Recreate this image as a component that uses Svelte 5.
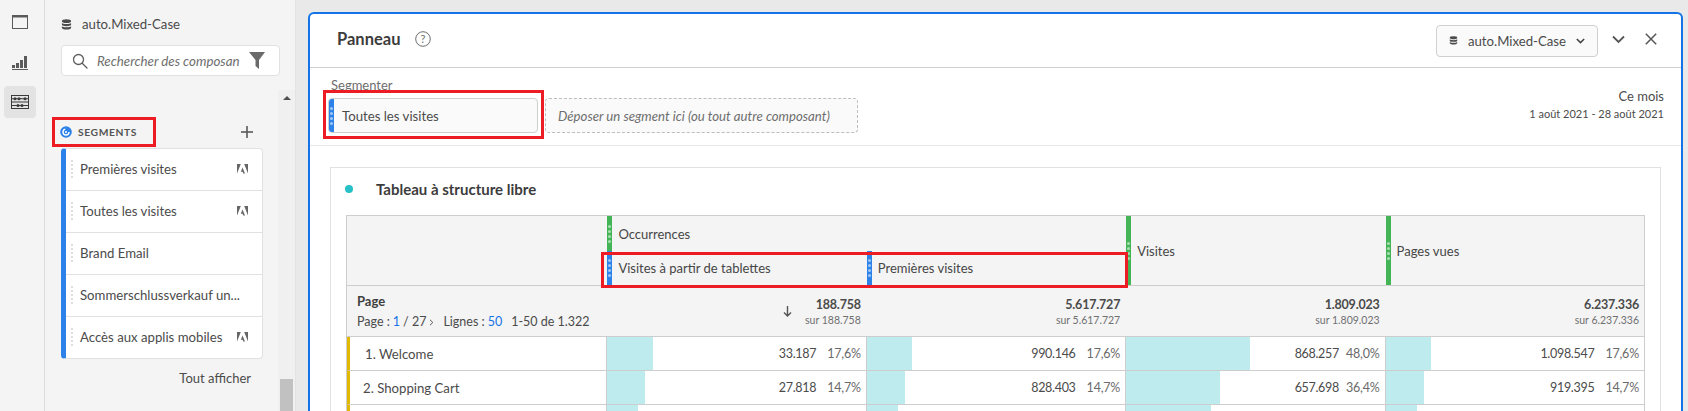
<script>
  const segments = [
    { name: 'Premières visites', adobe: true },
    { name: 'Toutes les visites', adobe: true },
    { name: 'Brand Email', adobe: false },
    { name: 'Sommerschlussverkauf un...', adobe: false },
    { name: 'Accès aux applis mobiles', adobe: true },
  ];

  const totals = [
    { value: '188.758', of: 'sur 188.758', sorted: true },
    { value: '5.617.727', of: 'sur 5.617.727' },
    { value: '1.809.023', of: 'sur 1.809.023' },
    { value: '6.237.336', of: 'sur 6.237.336' },
  ];

  const rows = [
    {
      label: '1. Welcome',
      indent: true,
      cells: [
        { bar: 17.6, value: '33.187', pct: '17,6%' },
        { bar: 17.6, value: '990.146', pct: '17,6%' },
        { bar: 48, value: '868.257', pct: '48,0%' },
        { bar: 17.6, value: '1.098.547', pct: '17,6%' },
      ],
    },
    {
      label: '2. Shopping Cart',
      cells: [
        { bar: 14.7, value: '27.818', pct: '14,7%' },
        { bar: 14.7, value: '828.403', pct: '14,7%' },
        { bar: 36.4, value: '657.698', pct: '36,4%' },
        { bar: 14.7, value: '919.395', pct: '14,7%' },
      ],
    },
    {
      label: '',
      cells: [
        { bar: 11.7, value: '', pct: '' },
        { bar: 12.2, value: '', pct: '' },
        { bar: 32.7, value: '', pct: '' },
        { bar: 12, value: '', pct: '' },
      ],
    },
  ];
</script>

{#snippet dbIcon(size)}
  <svg class="db" width={size} height={size} viewBox="0 0 12 12">
    <ellipse cx="6" cy="2.4" rx="5" ry="2" fill="#4b4b4b" />
    <path d="M1 4.4c1 1.5 9 1.5 10 0v2.2c-1 1.6-9 1.6-10 0z" fill="#4b4b4b" />
    <path d="M1 8c1 1.5 9 1.5 10 0v1.7c-1 2.4-9 2.4-10 0z" fill="#4b4b4b" />
  </svg>
{/snippet}

{#snippet grip()}
  <span class="grip"><i></i><i></i><i></i><i></i></span>
{/snippet}

<div class="app">
  <nav class="rail">
    <button class="rail-btn" aria-label="Panneaux">
      <svg width="18" height="16" viewBox="0 0 18 16" fill="none" stroke="#5a5a5a">
        <rect x="1.5" y="1.5" width="15" height="13" stroke-width="1" />
        <rect x="1.5" y="1.5" width="15" height="2" fill="#5a5a5a" stroke="none" />
      </svg>
    </button>
    <button class="rail-btn" aria-label="Visualisations">
      <svg width="18" height="16" viewBox="0 0 18 16" fill="#5a5a5a">
        <rect x="1" y="11" width="3" height="3" />
        <rect x="5" y="9" width="3" height="5" />
        <rect x="9" y="6" width="3" height="8" />
        <rect x="13" y="2" width="3" height="12" />
        <rect x="1" y="15" width="16" height="1" />
      </svg>
    </button>
    <button class="rail-btn active" aria-label="Composants">
      <svg width="20" height="16" viewBox="0 0 20 16" fill="#3a3a3a">
        <path d="M1 1h18v14H1z M2 2v12h16V2z" fill-rule="evenodd" />
        <rect x="1" y="7.5" width="18" height="1" />
        <rect x="2" y="4.2" width="16" height="1" />
        <rect x="2" y="11" width="16" height="1" />
        <circle cx="5" cy="4.7" r="1.5" /><circle cx="9" cy="4.7" r="1.5" /><circle cx="15" cy="4.7" r="1.5" />
        <circle cx="8" cy="11.5" r="1.5" /><circle cx="12" cy="11.5" r="1.5" />
      </svg>
    </button>
  </nav>

  <aside class="sidebar">
    <div class="side-body">
      <div class="suite">
        {@render dbIcon(11)}
        <span>auto.Mixed-Case</span>
      </div>

      <div class="search">
        <svg width="16" height="16" viewBox="0 0 16 16" fill="none" stroke="#5f5f5f" stroke-width="1.3">
          <circle cx="6.5" cy="6.5" r="5" />
          <path d="M10.2 10.2 15 15" stroke-linecap="round" />
        </svg>
        <span class="placeholder">Rechercher des composan</span>
        <svg width="16" height="17" viewBox="0 0 16 17" fill="#6a6a6a">
          <path d="M0 0h16L10 8v9L6.5 14V8z" />
        </svg>
      </div>

      <div class="seg-head">
        <div class="seg-title">
          <svg width="12" height="12" viewBox="0 0 12 12">
            <circle cx="6" cy="6" r="5.8" fill="#2c82e8" />
            <circle cx="6" cy="6" r="3" fill="none" stroke="#fff" stroke-width="1.4" stroke-dasharray="13 6" />
            <circle cx="6" cy="6" r="1" fill="#fff" />
          </svg>
          <span>SEGMENTS</span>
        </div>
        <svg class="plus" width="12" height="12" viewBox="0 0 12 12" fill="#5a5a5a">
          <rect x="5.2" y="0" width="1.6" height="12" />
          <rect x="0" y="5.2" width="12" height="1.6" />
        </svg>
      </div>

      <ul class="seg-list">
        {#each segments as s}
          <li>
            <span class="seg-dots"></span>
            <span class="seg-name">{s.name}</span>
            {#if s.adobe}
              <svg class="adobe" width="11" height="10" viewBox="0 0 11 10" fill="#666">
                <path d="M0 0h3.8L0 9.6z" />
                <path d="M7.2 0H11v9.6z" />
                <path d="M5.5 3.4 8 9.6H6.3L5.6 7.8H3.8z" />
              </svg>
            {/if}
          </li>
        {/each}
      </ul>

      <div class="show-all">Tout afficher</div>
    </div>
    <div class="scroll-track">
      <span class="scroll-up"></span>
      <span class="scroll-thumb"></span>
    </div>
  </aside>

  <main class="main">
    <section class="panel">
      <header class="panel-head">
        <h1>Panneau</h1>
        <svg class="help" width="16" height="16" viewBox="0 0 16 16">
          <circle cx="8" cy="8" r="7.3" fill="none" stroke="#6e6e6e" />
          <text x="8" y="11.5" text-anchor="middle">?</text>
        </svg>
        <div class="head-right">
          <div class="suite-select">
            {@render dbIcon(11)}
            <span>auto.Mixed-Case</span>
            <svg width="11" height="8" viewBox="0 0 11 8" fill="none" stroke="#444" stroke-width="1.9">
              <path d="M1 1.5l4.5 4.5L10 1.5" />
            </svg>
          </div>
          <svg width="13" height="9" viewBox="0 0 13 9" fill="none" stroke="#555" stroke-width="1.8">
            <path d="M1 1.5l5.5 5.5L12 1.5" />
          </svg>
          <svg class="close" width="12" height="12" viewBox="0 0 12 12" fill="none" stroke="#555" stroke-width="1.5">
            <path d="M.8.8l10.4 10.4M11.2.8.8 11.2" />
          </svg>
        </div>
      </header>

      <div class="filters">
        <div class="drop-area">
          <div class="filter-label">Segmenter</div>
          <div class="filter-row">
            <div class="chip-mark">
              <div class="chip">
                <span class="chip-bar">{@render grip()}</span>
                <span>Toutes les visites</span>
              </div>
            </div>
            <div class="drop-zone">Déposer un segment ici (ou tout autre composant)</div>
          </div>
        </div>
        <div class="range">
          <div class="range-name">Ce mois</div>
          <div class="range-dates">1 août 2021 - 28 août 2021</div>
        </div>
      </div>

      <div class="body">
        <div class="card">
          <div class="card-title">
            <span class="dot"></span>
            <h2>Tableau à structure libre</h2>
          </div>

          <div class="table">
            <div class="cell head-blank"></div>
            <div class="cell head occ">
              <span class="bar-mark green">{@render grip()}</span>
              <span>Occurrences</span>
            </div>
            <div class="cell head tall c3">
              <span class="bar-mark green">{@render grip()}</span>
              <span>Visites</span>
            </div>
            <div class="cell head tall c4">
              <span class="bar-mark green">{@render grip()}</span>
              <span>Pages vues</span>
            </div>
            <div class="sub-pair">
              <div class="cell head sub">
                <span class="bar-mark blue">{@render grip()}</span>
                <span>Visites à partir de tablettes</span>
              </div>
              <div class="cell head sub">
                <span class="bar-mark blue">{@render grip()}</span>
                <span>Premières visites</span>
              </div>
              <span class="red-box"></span>
            </div>

            <div class="cell total-dim">
              <div class="dim-name">Page</div>
              <div class="pager">
                Page : <a href="#p">1</a> / 27
                <svg width="5" height="7" viewBox="0 0 5 7" fill="none" stroke="#555" stroke-width="1"><path d="M1 .8 3.8 3.5 1 6.2" /></svg>
                <span class="gap">Lignes :</span> <a href="#l">50</a>
                <span class="gap">1-50 de 1.322</span>
              </div>
            </div>
            {#each totals as t}
              <div class="cell total">
                {#if t.sorted}
                  <svg class="sort" width="9" height="11" viewBox="0 0 9 11" fill="none" stroke="#555" stroke-width="1.4">
                    <path d="M4.5 0v10M1 6.5l3.5 3.5L8 6.5" />
                  </svg>
                {/if}
                <div class="total-nums">
                  <strong>{t.value}</strong>
                  <small>{t.of}</small>
                </div>
              </div>
            {/each}

            {#each rows as r}
              <div class="cell row-dim" class:indent={r.indent}>{r.label}</div>
              {#each r.cells as c, i}
                <div class="cell data" class:tight={i === 2}>
                  <span class="data-bar" style="width:{c.bar}%"></span>
                  {#if c.value}
                    <span class="num">{c.value}</span>
                    <span class="pct">{c.pct}</span>
                  {/if}
                </div>
              {/each}
            {/each}
          </div>
        </div>
      </div>
    </section>
  </main>
</div>

<style>
  :global(body) {
    overflow: hidden;
    background: #e9e9e9;
  }

  .app {
    display: flex;
    height: 411px;
    overflow: hidden;
    font-family: Lato, "Open Sans", sans-serif;
    font-size: 13.2px;
    color: #4b4b4b;
  }

  /* left icon rail */
  .rail {
    width: 45px;
    flex: none;
    box-sizing: border-box;
    background: #f4f4f4;
    border-right: 1px solid #dcdcdc;
    padding: 6px 4px;
    display: flex;
    flex-direction: column;
    gap: 8px;
  }

  .rail-btn {
    width: 32px;
    height: 32px;
    padding: 0;
    border: 0;
    background: none;
    border-radius: 4px;
    display: flex;
    align-items: center;
    justify-content: center;
  }
  .rail-btn.active { background: #e3e3e3; }

  /* components sidebar */
  .sidebar {
    width: 250px;
    flex: none;
    display: flex;
    background: #f4f4f4;
    border-right: 1px solid #e3e3e3;
  }

  .side-body {
    flex: 1;
    padding: 0 0 0 16px;
    min-width: 0;
  }

  .suite {
    height: 48px;
    display: flex;
    align-items: center;
    gap: 10px;
  }

  .search {
    width: 219px;
    height: 31px;
    margin-top: -3px;
    box-sizing: border-box;
    background: #fff;
    border: 1px solid #e1e1e1;
    border-radius: 4px;
    padding: 0 14px 0 10px;
    display: flex;
    align-items: center;
    gap: 9px;
  }

  .placeholder {
    flex: 1;
    overflow: hidden;
    white-space: nowrap;
    font-style: italic;
    color: #6e6e6e;
    font-size: 13.3px;
  }

  .seg-head {
    width: 202px;
    margin-top: 40px;
    height: 32px;
    display: flex;
    align-items: center;
    justify-content: space-between;
  }

  .seg-title {
    display: flex;
    align-items: center;
    gap: 6px;
    height: 30px;
    width: 104px;
    box-sizing: border-box;
    margin-left: -9px;
    border: 3px solid #ed1c24;
    padding-left: 5px;
    font-size: 10.3px;
    font-weight: 700;
    letter-spacing: 0.6px;
    color: #555;
  }

  .plus { margin-right: 10px; }

  .seg-list {
    list-style: none;
    margin: 0;
    padding: 0;
    width: 202px;
    box-sizing: border-box;
    background: #fff;
    border: 1px solid #e1e1e1;
    border-left: 5px solid #2c82e8;
    border-radius: 4px;
  }

  .seg-list li {
    height: 42px;
    box-sizing: border-box;
    display: flex;
    align-items: center;
    padding: 0 14px 2px 5px;
    border-bottom: 1px solid #e1e1e1;
  }
  .seg-list li:last-child { border-bottom: 0; height: 41px; }

  .seg-dots {
    width: 2px;
    height: 18px;
    margin-right: 7px;
    background: repeating-linear-gradient(#dedede 0 2px, transparent 2px 4px);
  }

  .seg-name {
    flex: 1;
    white-space: nowrap;
  }

  .show-all {
    width: 190px;
    margin-top: 11px;
    text-align: right;
    font-size: 13px;
  }

  .scroll-track {
    width: 17px;
    flex: none;
    margin-top: 90px;
    background: #f0f0f0;
    display: flex;
    flex-direction: column;
    align-items: center;
    justify-content: space-between;
  }

  .scroll-up {
    margin-top: 6px;
    width: 0;
    height: 0;
    border: 4px solid transparent;
    border-top: 0;
    border-bottom: 4px solid #505050;
  }

  .scroll-thumb {
    width: 13px;
    height: 32px;
    background: #c1c1c1;
  }

  /* main panel */
  .main {
    flex: 1;
    min-width: 0;
    padding: 12px 5px 0 12px;
    background: #e9e9e9;
  }

  .panel {
    height: 420px;
    box-sizing: border-box;
    background: #fff;
    border: 2px solid #1473e6;
    border-bottom: 0;
    border-radius: 6px 6px 0 0;
  }

  .panel-head {
    height: 54px;
    box-sizing: border-box;
    border-bottom: 1px solid #d0d0d0;
    display: flex;
    align-items: center;
    padding: 0 24px 3px 27px;
    gap: 15px;
  }

  .panel-head h1 {
    margin: 0;
    font-size: 16.5px;
    font-weight: 700;
    color: #3c3c3c;
  }

  .help text {
    font-size: 11px;
    fill: #6e6e6e;
  }

  .head-right {
    margin-left: auto;
    display: flex;
    align-items: center;
    gap: 14px;
  }

  .close { margin-left: 6px; }

  .suite-select {
    width: 162px;
    height: 32px;
    flex: none;
    box-sizing: border-box;
    border: 1px solid #d0d0d0;
    border-radius: 4px;
    background: #fafafa;
    display: flex;
    align-items: center;
    gap: 10px;
    padding: 0 12px;
    margin-top: 3px;
    white-space: nowrap;
  }

  .filters {
    height: 78px;
    box-sizing: border-box;
    border-bottom: 1px solid #e8e8e8;
    display: flex;
    justify-content: space-between;
    padding: 11px 17px 0 15px;
  }

  .filter-label {
    padding-left: 6px;
    height: 11px;
    line-height: 13px;
    font-size: 13px;
    color: #6e6e6e;
  }

  .filter-row {
    display: flex;
    align-items: center;
  }

  .chip-mark {
    border: 3px solid #ed1c24;
    padding: 5px 3px 3px 2px;
    margin-left: -2px;
    width: 221px;
    box-sizing: border-box;
  }

  .chip {
    height: 35px;
    box-sizing: border-box;
    background: #fafafa;
    border: 1px solid #cfcfcf;
    border-radius: 4px;
    display: flex;
    align-items: center;
    gap: 8px;
    overflow: hidden;
  }

  .chip-bar {
    width: 5px;
    align-self: stretch;
    background: #2c82e8;
    display: flex;
    align-items: center;
    justify-content: center;
  }

  .drop-zone {
    width: 313px;
    height: 35px;
    margin-top: 2px;
    margin-left: 1px;
    box-sizing: border-box;
    background: #fafafa;
    border: 1px dashed #bdbdbd;
    border-radius: 4px;
    display: flex;
    align-items: center;
    padding-left: 12px;
    font-style: italic;
    color: #6e6e6e;
  }

  .range { text-align: right; padding-top: 6px; }

  .range-name {
    font-size: 13px;
    margin-top: 2px;
    line-height: 18px;
  }

  .range-dates {
    font-size: 11px;
    line-height: 18px;
  }

  .body { padding: 21px 20px 0 20px; }

  .card {
    border: 1px solid #e1e1e1;
    padding: 0 15px 0 15px;
    height: 260px;
  }

  .card-title {
    height: 47px;
    box-sizing: border-box;
    display: flex;
    align-items: center;
    gap: 23px;
    padding-bottom: 5px;
  }

  .dot {
    width: 8px;
    height: 8px;
    margin-left: -1px;
    border-radius: 50%;
    background: #27c0c8;
  }

  .card-title h2 {
    margin: 0;
    font-size: 15px;
    font-weight: 700;
    color: #3c3c3c;
  }

  /* freeform table */
  .table {
    display: grid;
    grid-template-columns: repeat(5, 1fr);
    grid-template-rows: 35px 35px 51px 34px 34px 34px;
    border: 1px solid #cdcdcd;
    border-bottom: 0;
  }

  .cell { box-sizing: border-box; }

  .head {
    display: flex;
    align-items: center;
    gap: 6px;
    background: #f4f4f4;
    color: #464646;
    font-size: 13px;
  }

  .head-blank {
    grid-row: 1 / 3;
    background: #f4f4f4;
    border-bottom: 1px solid #cdcdcd;
  }

  .occ { grid-column: 2 / 4; align-items: stretch; }
  .occ > span:last-child { align-self: center; }
  .tall { grid-row: 1 / 3; align-items: stretch; border-bottom: 1px solid #cdcdcd; }
  .tall > span:last-child { align-self: center; }
  .c3 { grid-column: 4; }
  .c4 { grid-column: 5; }

  .sub-pair {
    grid-column: 2 / 4;
    grid-row: 2;
    display: grid;
    grid-template-columns: 1fr 1fr;
    position: relative;
    border-bottom: 1px solid #cdcdcd;
  }

  .sub { align-items: stretch; }
  .sub > span:last-child { align-self: center; }

  .red-box {
    position: absolute;
    inset: 1px -3px -3px -5px;
    border: 3px solid #ed1c24;
  }

  .bar-mark {
    width: 5px;
    margin-left: 1px;
    flex: none;
    display: flex;
    align-items: center;
    justify-content: center;
  }
  .bar-mark.green { background: #44b556; }
  .bar-mark.blue { background: #2c82e8; }

  .grip {
    display: flex;
    flex-direction: column;
    gap: 2px;
  }
  .grip i {
    display: block;
    width: 3px;
    height: 3px;
    border-radius: 50%;
    background: rgba(255, 255, 255, 0.55);
  }

  .total-dim {
    background: #f4f4f4;
    border-bottom: 1px solid #cdcdcd;
    padding: 6px 0 0 10px;
  }

  .dim-name {
    font-weight: 700;
    font-size: 13px;
    line-height: 18px;
    color: #3f3f3f;
  }

  .pager {
    font-size: 12.5px;
    line-height: 18px;
    margin-top: 3px;
    white-space: nowrap;
    display: flex;
    align-items: center;
    gap: 3px;
  }
  .pager a { color: #1473e6; text-decoration: none; }
  .pager .gap { margin-left: 6px; }

  .total {
    background: #f4f4f4;
    border-bottom: 1px solid #cdcdcd;
    display: flex;
    justify-content: flex-end;
    align-items: center;
    gap: 13px;
    padding-right: 5px;
  }

  .total-nums {
    text-align: right;
    display: flex;
    flex-direction: column;
    padding-top: 1px;
  }
  .total-nums strong { font-size: 12.5px; line-height: 16px; color: #4b4b4b; letter-spacing: -0.2px; }
  .total-nums small { font-size: 10.5px; line-height: 14px; color: #707070; }

  .row-dim {
    border-left: 3px solid #e3b800;
    border-bottom: 1px solid #cdcdcd;
    padding-left: 13px;
    display: flex;
    align-items: center;
  }
  .row-dim.indent { padding-left: 15px; }

  .data {
    position: relative;
    border-left: 1px solid #cdcdcd;
    border-bottom: 1px solid #cdcdcd;
    display: flex;
    justify-content: flex-end;
    align-items: center;
    gap: 11px;
    padding-right: 5px;
    font-size: 12.5px;
  }
  .data.tight { gap: 7px; }

  .data-bar {
    position: absolute;
    left: 0;
    top: 0;
    bottom: 0;
    background: #bdebee;
  }

  .num, .pct { position: relative; }
  .num { letter-spacing: -0.3px; }
  .pct { color: #6a6a6a; letter-spacing: -0.2px; }
</style>
